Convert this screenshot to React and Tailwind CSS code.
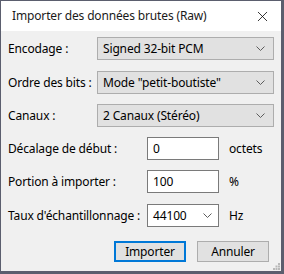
import { X } from 'lucide-react';

const Chevron = ({ className = '' }) => (
  <svg width="9" height="6" viewBox="0 0 9 6" className={className}>
    <path d="M0.5 0.5 L4.5 4.5 L8.5 0.5" fill="none" stroke="#5c5c5c" strokeWidth="1" />
  </svg>
);

const SelectRow = ({ label, value, mt }) => (
  <div className={`flex items-center h-[23px] ${mt}`}>
    <div className="w-[89px] shrink-0">{label}</div>
    <div className="w-[180px] h-[23px] bg-[#e1e1e1] border border-[#adadad] flex items-center pl-[5px] pr-[8px]">
      <span className="flex-1">{value}</span>
      <Chevron />
    </div>
  </div>
);

const InputRow = ({ label, value, unit, mt }) => (
  <div className={`flex items-center h-[23px] ${mt}`}>
    <div className="w-[139px] shrink-0">{label}</div>
    <div className="w-[72px] h-[23px] bg-white border border-[#7a7a7a] flex items-center pl-[5px]">{value}</div>
    <div className="ml-[10px]">{unit}</div>
  </div>
);

const App = () => {
  return (
    <div
      className="w-[284px] h-[274px] bg-[#f0f0f0] border-l border-t border-[#5b5e6e] border-r-[3px] border-b-[3px] flex flex-col text-[12px] tracking-[-0.15px] text-black leading-none"
      style={{ fontFamily: '"Noto Sans", "Liberation Sans", sans-serif' }}
    >
      <div className="h-[30px] bg-white flex items-center pl-[11px] pr-[10px] shrink-0">
        <span className="flex-1 text-[#1a1a1a]">Importer des données brutes (Raw)</span>
        <X size={17} strokeWidth={1.1} className="text-black" />
      </div>

      <div className="flex flex-col px-[7px] pt-[6px]">
        <SelectRow label="Encodage :" value="Signed 32-bit PCM" mt="" />
        <SelectRow label="Ordre des bits :" value='Mode "petit-boutiste"' mt="mt-[11px]" />
        <SelectRow label="Canaux :" value="2 Canaux (Stéréo)" mt="mt-[10px]" />
        <InputRow label="Décalage de début :" value="0" unit="octets" mt="mt-[10px]" />
        <InputRow label="Portion à importer :" value="100" unit="%" mt="mt-[10px]" />
        <div className="flex items-center h-[23px] mt-[11px]">
          <div className="w-[139px] shrink-0">Taux d'échantillonnage :</div>
          <div className="w-[72px] h-[23px] bg-white border border-[#7a7a7a] flex items-center pl-[5px] pr-[6px]">
            <span className="flex-1">44100</span>
            <Chevron />
          </div>
          <div className="ml-[10px]">Hz</div>
        </div>

        <div className="flex justify-end gap-[11px] mt-[14px] pr-[5px]">
          <button className="w-[72px] h-[21px] bg-[#e1e1e1] border-2 border-[#0078d7] flex items-center justify-center">
            Importer
          </button>
          <button className="w-[72px] h-[21px] bg-[#e1e1e1] border border-[#adadad] flex items-center justify-center">
            Annuler
          </button>
        </div>
      </div>

      <div className="flex-1 flex items-end justify-end pr-[1px] pb-[1px]">
        <svg width="7" height="7" viewBox="0 0 7 7">
          <rect x="5" y="0" width="2" height="2" fill="#b8b8b8" />
          <rect x="2.5" y="2.5" width="2" height="2" fill="#b8b8b8" />
          <rect x="5" y="2.5" width="2" height="2" fill="#b8b8b8" />
          <rect x="0" y="5" width="2" height="2" fill="#b8b8b8" />
          <rect x="2.5" y="5" width="2" height="2" fill="#b8b8b8" />
          <rect x="5" y="5" width="2" height="2" fill="#b8b8b8" />
        </svg>
      </div>
    </div>
  );
};

export default App;
